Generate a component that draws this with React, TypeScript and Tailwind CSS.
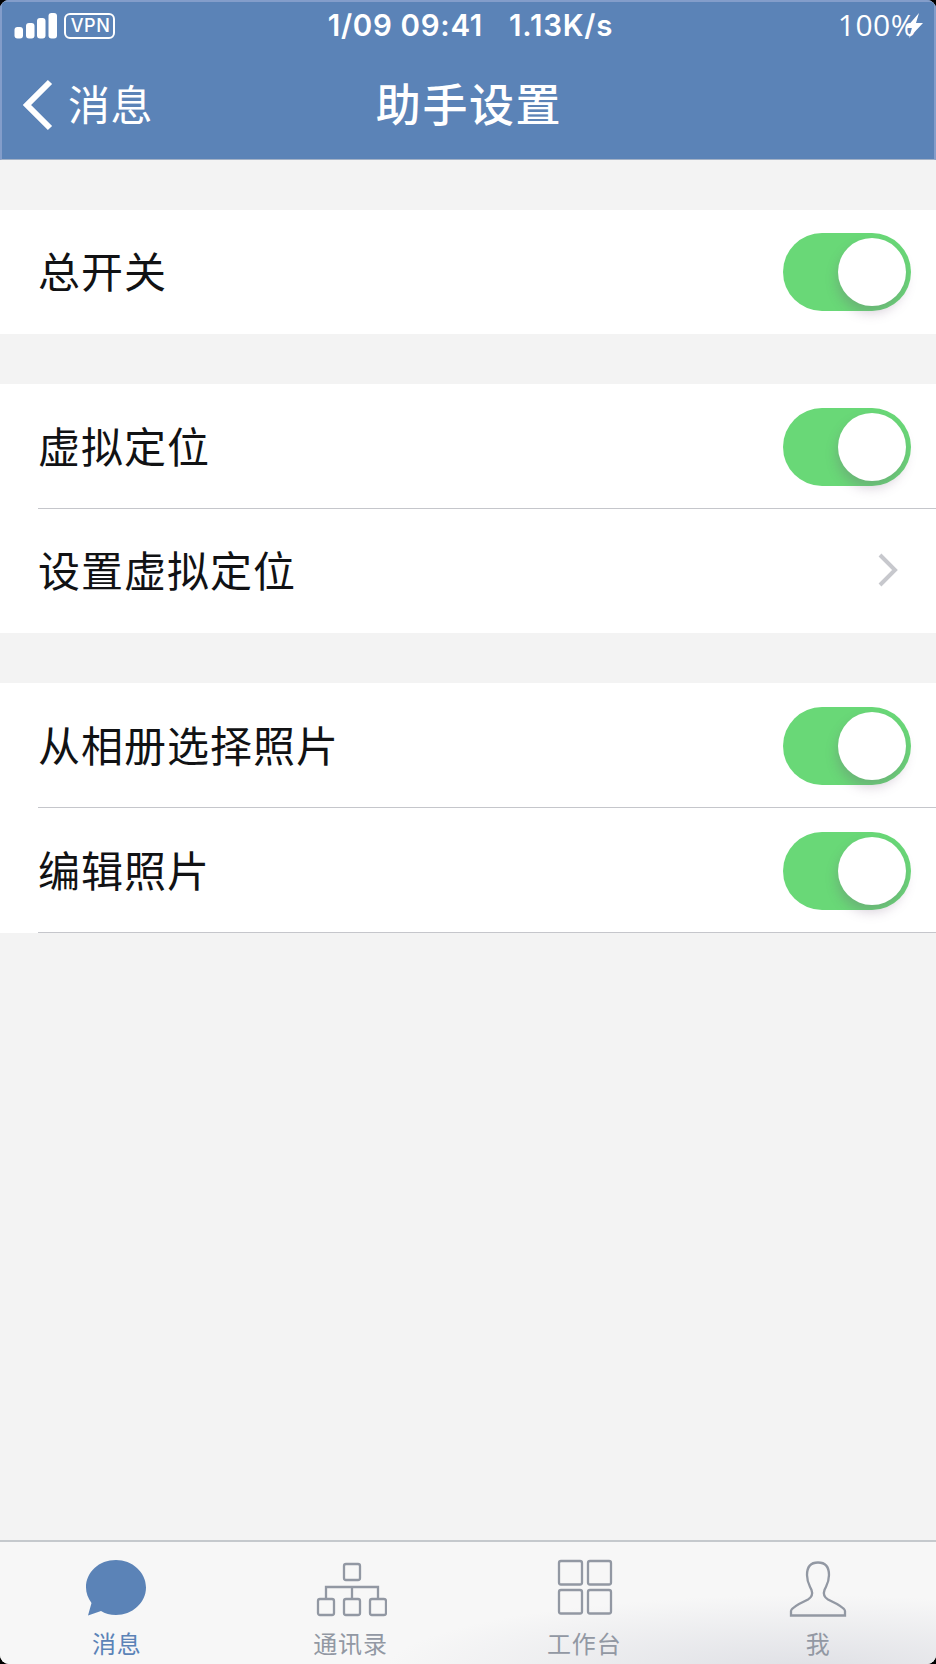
import type { ReactNode } from "react";

const Toggle = () => (
  <button className="flex h-[78px] w-32 items-center justify-end rounded-full bg-[#69d877] pr-[5px]">
    <span className="h-[68px] w-[68px] rounded-full bg-white shadow-[-1px_7px_12px_rgba(110,80,120,0.27)]" />
  </button>
);

const Chevron = () => (
  <svg width="20" height="36" viewBox="0 0 20 36" className="mr-[13px] mb-[2px]" fill="none" stroke="#c7c8cd" strokeWidth="4">
    <path d="M2 3 L17 18 L2 33" />
  </svg>
);

const Row = ({ label, children, className = "" }: { label: string; children: ReactNode; className?: string }) => (
  <div className="pl-[38px]">
    <div className={`flex items-center justify-between pr-[25px] ${className}`}>
      <span className="pt-[2px] text-[42px] leading-none tracking-[1px] whitespace-nowrap text-[#111214]">{label}</span>
      {children}
    </div>
  </div>
);

const StatusBar = () => (
  <div className="grid h-[47px] grid-cols-[1fr_auto_1fr] items-center pr-[10px] pl-3 text-[29.5px] leading-none whitespace-nowrap">
    <div className="flex items-center gap-[7px]">
      <svg width="43" height="26" viewBox="0 0 43 26" fill="white">
        <rect x="0.5" y="14" width="8.5" height="11.5" rx="3" />
        <rect x="12" y="10" width="8.5" height="15.5" rx="3" />
        <rect x="23" y="5" width="8.5" height="20.5" rx="3" />
        <rect x="34.5" y="0" width="8.5" height="25.5" rx="3" />
      </svg>
      <span className="flex h-[26px] w-[51px] items-center justify-center rounded-[6px] border-2 border-white pl-[2px] text-[18px] font-medium tracking-[0.6px]">
        VPN
      </span>
    </div>
    <div className="flex gap-[26px] pt-px pl-[3px] font-semibold">
      <span className="tracking-[0.7px]">1/09 09:41</span>
      <span className="tracking-[0.8px]">1.13K/s</span>
    </div>
    <div className="flex items-center justify-end">
      <span className="pb-px font-['Open_Sans'] text-[30px] tracking-[0.5px]">100%</span>
      <svg width="20" height="26" viewBox="0 0 20 26" className="-ml-[12px]" fill="white">
        <path d="M15 0 L2 15 H8 L5 25 L19 10 H12 Z" />
      </svg>
    </div>
  </div>
);

const Header = () => (
  <header className="h-[160px] border-x-2 border-t-2 border-b border-[#839dca] border-b-[#a3b1c6] bg-[#5b83b7] text-white">
    <StatusBar />
    <div className="grid h-[110px] grid-cols-[1fr_auto_1fr] items-center pt-[2px] whitespace-nowrap">
      <button className="flex items-center gap-[14px] pl-5">
        <svg width="32" height="52" viewBox="0 0 32 52" fill="none" stroke="white" strokeWidth="6">
          <path d="M28 3 L5 26 L28 49" />
        </svg>
        <span className="pt-[2px] text-[42px] leading-none tracking-[0.5px]">消息</span>
      </button>
      <h1 className="pl-[2px] text-[45px] leading-none font-medium tracking-[1.6px]">助手设置</h1>
    </div>
  </header>
);

const Tab = ({ label, active = false, children }: { label: string; active?: boolean; children: ReactNode }) => (
  <button className={`flex flex-col items-center gap-[13px] ${active ? "text-[#5b83b7]" : "text-[#9298a3]"}`}>
    <svg width="72" height="60" viewBox="0 0 72 60" fill="none" stroke="currentColor" strokeWidth="2.3">
      {children}
    </svg>
    <span className="text-[24px] leading-[30px] tracking-[1px]">{label}</span>
  </button>
);

const TabBar = () => (
  <nav className="grid h-[124px] grid-cols-4 border-t-2 border-[#c5c9cd] bg-[#f7f7f7] bg-[radial-gradient(ellipse_420px_75px_at_86%_105%,#dfe0e5,#f7f7f700)] pt-[15px] pr-px">
    <Tab label="消息" active>
      <path
        d="M35 3 C51 3 65 15 65 30.500 C65 46 51 58 35 58 C29 58 24 56.500 20 54 L7 58.500 L10.500 46 C7 41 5 36 5 30.500 C5 15 18 3 35 3 Z"
        fill="currentColor"
        stroke="none"
      />
    </Tab>
    <Tab label="通讯录">
      <rect x="29" y="7" width="16" height="16" rx="2" />
      <path d="M11 42 V30 H63 V42 M37 30 V42" />
      <rect x="3" y="42" width="16" height="16" rx="2" />
      <rect x="29" y="42" width="16" height="16" rx="2" />
      <rect x="55" y="42" width="16" height="16" rx="2" />
    </Tab>
    <Tab label="工作台">
      <rect x="11" y="4" width="23" height="23.500" rx="2" />
      <rect x="40" y="4" width="23" height="23.500" rx="2" />
      <rect x="11" y="33" width="23" height="23.500" rx="2" />
      <rect x="40" y="33" width="23" height="23.500" rx="2" />
    </Tab>
    <Tab label="我">
      <path d="M9 58.500 V54 C9 52 12 50 17 47 L26 42.500 C30 40 31 37 29.500 33 C28 29 25 26 25 18 C25 10 29 5.500 36 5.500 C43 5.500 47 10 47 18 C47 26 44 29 42.500 33 C41 37 42 40 46 42.500 L55 47 C60 50 63 52 63 54 V58.500 Z" />
    </Tab>
  </nav>
);

export default function App() {
  return (
    <div className="h-[1664px] w-[936px] bg-black font-[Inter,'Noto_Sans_CJK_SC',sans-serif]">
      <div className="flex h-full flex-col overflow-hidden rounded-[9px] bg-[#f3f3f3]">
        <Header />
        <main className="flex flex-1 flex-col gap-[50px] pt-[50px]">
          <section className="bg-white">
            <Row label="总开关" className="h-[124px]">
              <Toggle />
            </Row>
          </section>
          <section className="bg-white">
            <Row label="虚拟定位" className="h-[125px] border-b border-[#c5c6cb] pt-[2px]">
              <Toggle />
            </Row>
            <Row label="设置虚拟定位" className="h-[124px]">
              <Chevron />
            </Row>
          </section>
          <section className="bg-white">
            <Row label="从相册选择照片" className="h-[125px] border-b border-[#c5c6cb] pt-[2px]">
              <Toggle />
            </Row>
            <Row label="编辑照片" className="h-[125px] border-b border-[#c5c6cb] pt-[2px]">
              <Toggle />
            </Row>
          </section>
        </main>
        <TabBar />
      </div>
    </div>
  );
}
